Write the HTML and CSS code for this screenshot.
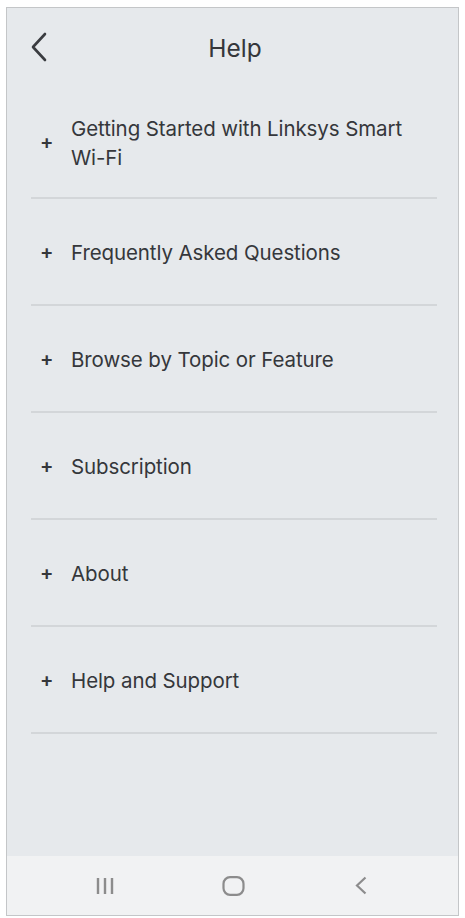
FILE: index.html
```html
<!DOCTYPE html>
<html>
<head>
<meta charset="utf-8">
<link rel="stylesheet" href="styles.css">
</head>
<body>
<div class="frame">
  <header class="header">
    <svg class="back" width="18" height="30" viewBox="0 0 18 30"><path d="M15 2 L3 15 L15 28" fill="none" stroke="#3a3c40" stroke-width="2.6" stroke-linecap="round" stroke-linejoin="round"/></svg>
    <h1 class="title">Help</h1>
  </header>
  <ul class="list">
    <li class="item item-tall"><span class="plus">+</span><span class="label">Getting Started with Linksys Smart <span class="nowrap">Wi-Fi</span></span></li>
    <li class="item"><span class="plus">+</span><span class="label">Frequently Asked Questions</span></li>
    <li class="item"><span class="plus">+</span><span class="label">Browse by Topic or Feature</span></li>
    <li class="item"><span class="plus">+</span><span class="label">Subscription</span></li>
    <li class="item"><span class="plus">+</span><span class="label">About</span></li>
    <li class="item"><span class="plus">+</span><span class="label">Help and Support</span></li>
  </ul>
  <div class="spacer"></div>
  <nav class="navbar">
    <svg class="nav-recent" width="20" height="20" viewBox="0 0 20 20"><path d="M3 2v16M10 2v16M17 2v16" stroke="#8c8c8c" stroke-width="2.4"/></svg>
    <svg class="nav-home" width="23" height="20" viewBox="0 0 23 20"><rect x="1.5" y="1.2" width="20" height="17.6" rx="6.5" fill="none" stroke="#8c8c8c" stroke-width="2.2"/></svg>
    <svg class="nav-back" width="12" height="19" viewBox="0 0 12 19"><path d="M10.5 1.5 L2 9.5 L10.5 17.5" fill="none" stroke="#8c8c8c" stroke-width="2.2"/></svg>
  </nav>
</div>
</body>
</html>
```
FILE: styles.css
```css
html, body {
  margin: 0;
  padding: 0;
  background: #ffffff;
}
body {
  padding: 7px 6px 2px 6px;
  font-family: "Inter", "Open Sans", "Liberation Sans", sans-serif;
  color: #35373b;
}
.frame {
  box-sizing: border-box;
  width: 453px;
  height: 909px;
  border: 1px solid #c4c6c8;
  background: #e6e9ec;
  display: flex;
  flex-direction: column;
}
.header {
  height: 78px;
  display: flex;
  align-items: center;
  position: relative;
  padding-left: 23px;
}
.back {
  margin-top: -1px;
}
.title {
  position: absolute;
  left: 0;
  right: 0;
  top: 26px;
  margin: 0;
  text-align: center;
  font-weight: 400;
  font-size: 24.5px;
  line-height: 28px;
  padding-left: 5px;
  color: #35373b;
}
.list {
  list-style: none;
  margin: 0;
  padding: 0 21px 0 24px;
}
.item {
  display: flex;
  align-items: center;
  height: 105px;
  border-bottom: 2px solid #d3d6d9;
  font-size: 20.5px;
  letter-spacing: -0.1px;
  padding-top: 2px;
  box-sizing: content-box;
}
.item-tall {
  height: 109px;
}
.item:not(.item-tall) {
  height: 103px;
}
.plus {
  width: 40px;
  padding-left: 9px;
  box-sizing: border-box;
  font-size: 20px;
  font-weight: 600;
  margin-top: -2px;
}
.label {
  max-width: 360px;
  line-height: 29px;
}
.nowrap {
  white-space: nowrap;
}
.spacer {
  flex: 1;
}
.navbar {
  height: 59px;
  background: #f1f2f3;
  display: flex;
  align-items: center;
  padding-left: 88px;
}
.nav-home {
  margin-left: 107px;
}
.nav-back {
  margin-left: 110px;
}
```
